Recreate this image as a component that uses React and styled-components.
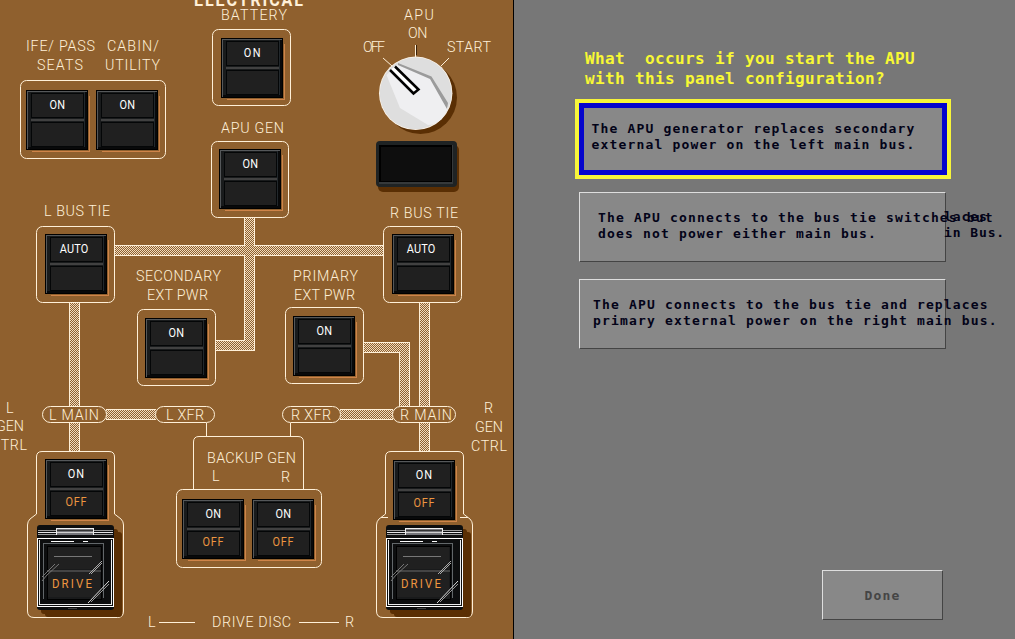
import React, { useLayoutEffect, useRef, useState } from 'react';
import styled, { createGlobalStyle } from 'styled-components';

const colors = {
  panel: '#8f602e',
  shadow: '#5a2f04',
  cream: '#fff0d8',
  orange: '#ee9640',
  glow: '#cf8449',
  screen: '#777777',
  button: '#888888',
  ink: '#030318',
};

const NARROW = 0.92;

const GlobalStyle = createGlobalStyle`
  body {
    margin: 0;
    overflow: hidden;
    background-color: ${colors.screen};
  }
`;

const Page = styled.div`
  display: grid;
  grid-template-columns: 514px 1fr;
  width: 1015px;
  height: 639px;
  overflow: hidden;
`;

/* ---------- overhead panel ---------- */

const Panel = styled.section`
  position: relative;
  box-sizing: border-box;
  height: 639px;
  overflow: hidden;
  background-color: ${colors.panel};
  border-right: 1px solid #000;
`;

const Schematic = styled.svg`
  position: absolute;
  top: 0;
  left: 0;
`;

const LabelText = styled.span`
  position: absolute;
  left: ${props => props.$x - 0.5}px;
  top: ${props => props.$base - 15}px;
  font-family: Roboto, 'Liberation Sans', sans-serif;
  font-size: ${props => props.$size}px;
  font-weight: ${props => (props.$bold ? 700 : 300)};
  line-height: 21px;
  color: ${colors.cream};
  white-space: pre;
  transform: scaleX(${NARROW});
  transform-origin: left;
`;

const SwitchBody = styled.div`
  position: absolute;
  left: ${props => props.$x}px;
  top: ${props => props.$y}px;
  box-sizing: border-box;
  width: 62px;
  height: 60px;
  padding: 2px 3px 3px 4px;
  display: grid;
  grid-template-rows: 25px 2px 25px;
  row-gap: 1px;
  background-color: #191b1c;
  border: 1px solid #000;
  box-shadow: inset 1px 1px 0 #55585a, inset -2px -2px 0 #08090a, inset -3px 0 0 #22282c;

  &::after {
    content: '';
    position: absolute;
    left: 5px;
    top: 5px;
    right: -3px;
    bottom: -3px;
    border-right: 1px solid ${colors.glow};
    border-bottom: 1px solid ${colors.glow};
  }
`;

const SwitchLens = styled.div`
  display: flex;
  justify-content: center;
  background-color: #202020;
  border: 1px solid #040607;
  box-sizing: border-box;
`;

const SwitchText = styled.span`
  font-family: Roboto, 'Liberation Sans', sans-serif;
  font-size: 13px;
  line-height: ${props => (props.$amber ? 19 : 22)}px;
  letter-spacing: ${props => props.$tracking}px;
  color: ${props => (props.$amber ? colors.orange : '#ffffff')};
  transform: translateX(${props => props.$shift || 0}px) scaleX(0.84);
`;

const SwitchBar = styled.div`
  background-color: #414141;
`;

const Guard = styled.div`
  position: absolute;
  left: ${props => props.$x}px;
  top: 525px;
  width: 77px;
  height: 85px;
  border-radius: 3px;
  background-color: #0d0e0f;
  box-shadow: 4px 4px 0 ${colors.shadow}, 8px 7px 0 ${colors.shadow};
`;

const GuardArt = styled.svg`
  display: block;
`;

const GuardText = styled.span`
  position: absolute;
  left: 15px;
  top: 50px;
  font-family: Roboto, 'Liberation Sans', sans-serif;
  font-size: 13px;
  line-height: 18px;
  letter-spacing: 2.4px;
  color: ${colors.orange};
  transform: scaleX(0.88);
  transform-origin: left;
`;

const labels = [
  ['ELECTRICAL', 194, 5, 107, 17.5, true],
  ['BATTERY', 221, 20, 64],
  ['IFE/ PASS', 26, 51, 67],
  ['SEATS', 37, 70, 44],
  ['CABIN/', 107, 51, 50],
  ['UTILITY', 105, 70, 53],
  ['APU GEN', 221, 133, 61],
  ['APU', 404, 20, 28],
  ['ON', 408, 38, 17.5],
  ['OFF', 363, 52, 20],
  ['START', 447, 52, 42],
  ['L BUS TIE', 44, 216, 64],
  ['R BUS TIE', 390, 218, 66],
  ['SECONDARY', 136, 281, 83],
  ['EXT PWR', 147, 300, 59],
  ['PRIMARY', 293, 281, 63],
  ['EXT PWR', 294, 300, 59],
  ['L MAIN', 49, 420, 48],
  ['L XFR', 166, 420, 36],
  ['R XFR', 291, 420, 38],
  ['R MAIN', 400, 420, 50],
  ['L', 6, 413, 6],
  ['GEN', -4, 431, 26],
  ['CTRL', -9, 450, 34],
  ['R', 484, 413, 7],
  ['GEN', 475, 432, 26],
  ['CTRL', 471, 451, 34],
  ['BACKUP GEN', 207, 463, 87],
  ['L', 212, 481, 6],
  ['R', 281, 482, 7],
  ['L', 148, 627, 6],
  ['DRIVE DISC', 212, 627, 77],
  ['R', 345, 627, 7],
];

const switches = [
  { x: 26, y: 90, top: 'ON' },
  { x: 96, y: 90, top: 'ON' },
  { x: 221, y: 38, top: 'ON', tracking: 1.8 },
  { x: 219, y: 149, top: 'ON' },
  { x: 45, y: 234, top: 'AUTO' },
  { x: 392, y: 234, top: 'AUTO' },
  { x: 145, y: 318, top: 'ON' },
  { x: 293, y: 316, top: 'ON' },
  { x: 45, y: 459, top: 'ON', bottom: 'OFF', tracking: 1.3 },
  { x: 393, y: 460, top: 'ON', bottom: 'OFF', tracking: 1.3 },
  { x: 182, y: 499, top: 'ON', bottom: 'OFF' },
  { x: 252, y: 499, top: 'ON', bottom: 'OFF' },
];

const frames = [
  [20, 80, 146, 79],
  [212, 29, 79, 77],
  [211, 141, 78, 77],
  [36, 226, 79, 77],
  [383, 226, 79, 77],
  [137, 309, 79, 77],
  [285, 307, 79, 77],
  [176, 489, 146, 79],
];

const pills = [
  [42, 65],
  [155, 60],
  [282, 59],
  [392, 64],
];

const wires = [
  'M115 250H384',
  'M249.500 218V345H216',
  'M74.500 303V452',
  'M424.500 303V452',
  'M364 347.500H404.500V410',
  'M106 414.500H156',
  'M340 414.500H393',
];

// Spreads or tightens the lettering so it fills its engraved width.
const Label = ({ text, x, base, width, size = 15.5, bold }) => {
  const ref = useRef(null);
  const [tracking, setTracking] = useState(0);

  useLayoutEffect(() => {
    if (text.length < 2) return;
    ref.current.style.letterSpacing = '0px';
    const natural = ref.current.getBoundingClientRect().width;
    const gap = (width + 2 - natural) / NARROW / (text.length - 1);
    ref.current.style.letterSpacing = `${gap}px`;
    setTracking(gap);
  }, [text, width]);

  return (
    <LabelText
      ref={ref}
      $x={x}
      $base={base}
      $size={size}
      $bold={bold}
      style={{ letterSpacing: `${tracking}px` }}
    >
      {text}
    </LabelText>
  );
};

const Switch = ({ x, y, top, bottom, tracking = 0.2 }) => (
  <SwitchBody $x={x} $y={y}>
    <SwitchLens>
      <SwitchText $tracking={tracking} $shift={top === 'AUTO' ? -2 : 0}>{top}</SwitchText>
    </SwitchLens>
    <SwitchBar />
    <SwitchLens>
      <SwitchText $amber $tracking={0.8} $shift={-0.5}>{bottom}</SwitchText>
    </SwitchLens>
  </SwitchBody>
);

const DriveGuard = ({ x }) => (
  <Guard $x={x}>
    <GuardArt width="77" height="85" viewBox="0 0 77 85" fill="none" shapeRendering="crispEdges">
      <path d="M1 5.500H76M1 9.500H76" stroke="#9a9a9a" />
      <path d="M1 7.500H76" stroke="#e5e5e8" />
      <path d="M19 3H57V10H19Z" fill="#75757a" />
      <path d="M19.500 3V10M56.500 3V10M20 3.500H56" stroke="#f0f0f0" />
      <path d="M20 5.500H56" stroke="#333" />
      <path d="M20 7.500H56" stroke="#d0d0d0" />
      <path d="M0.500 13.500H76.500V81.500H0.500Z" stroke="#fff" />
      <path d="M2.500 15V79.500H74.500V15" stroke="#eee" />
      <path d="M14 16.500H37M46 16.500H51" stroke="#fff" />
      <path d="M6.500 74V18.500H66.500V73" stroke="#62676a" />
      <path d="M10 21H64V74H10Z" fill="#191a1b" stroke="#000" />
      <path d="M11 22H63V44H11ZM11 47H63V72H11Z" fill="#202020" />
      <path d="M10 45.500H64" stroke="#444" strokeWidth="2" />
      <path d="M17 31.500H55" stroke="#777" />
      <path d="M31 83.500H40" stroke="#444" />
      <g shapeRendering="auto" stroke="#aaa">
        <path d="M5 56L10 50L22 39M5 52L18 39" stroke="#777" />
        <path d="M52 49L65 36M54 49L65 38" />
        <path d="M51 78L72 56" stroke="#ddd" />
        <path d="M54 77L72 59" stroke="#999" />
      </g>
    </GuardArt>
    <GuardText>DRIVE</GuardText>
  </Guard>
);

const PanelDrawing = () => (
  <Schematic width="513" height="639" viewBox="0 0 513 639" fill="none" stroke={colors.cream}>
    <defs>
      <pattern id="dots" width="2" height="2" patternUnits="userSpaceOnUse">
        <path d="M0 0h1v1h-1zM1 1h1v1h-1z" fill="#f0dcc0" stroke="none" />
      </pattern>
    </defs>

    <g shapeRendering="crispEdges">
      {wires.map(d => <path key={d} d={d} strokeWidth="11" />)}
      {wires.map(d => <path key={d} d={d} strokeWidth="9" stroke={colors.panel} />)}
      {wires.map(d => <path key={d} d={d} strokeWidth="9" stroke="url(#dots)" />)}
    </g>

    {frames.map(([x, y, w, h]) => (
      <rect key={`${x}-${y}`} x={x + 0.5} y={y + 0.5} width={w - 1} height={h - 1} rx="6" fill={colors.panel} />
    ))}
    {pills.map(([x, w]) => (
      <rect key={x} x={x + 0.5} y="406.500" width={w - 1} height="16" rx="8" fill={colors.panel} />
    ))}

    <path d="M193.500 489V442q0 -5.500 5.500 -5.500H298q5.500 0 5.500 5.500V489" />
    <path d="M206.500 423V436M290.500 423V436" />
    <path d="M159 622.500H195M299 622.500H339" />

    {/* generator control surrounds */}
    <path
      fill={colors.panel}
      d="M36.500 514V457q0 -5.500 5.500 -5.500H109q5.500 0 5.500 5.500V514L121 519q2.500 2.500 2.500 6V611q0 6.500 -6 6.500H34q-6.500 0 -6.500 -6.500V525q0 -3.500 2.500 -6Z"
    />
    <path
      fill={colors.panel}
      d="M385.500 514V457q0 -5.500 5.500 -5.500H458q5.500 0 5.500 5.500V514L470 519q2.500 2.500 2.500 6V611q0 6.500 -6 6.500H383q-6.500 0 -6.500 -6.500V525q0 -3.500 2.500 -6Z"
    />
    <path d="M381 517.500H388M460 517.500H468" />

    {/* APU selector */}
    <path d="M383 58L392 66M449 58L441 66M415.500 45V57" />
    <path d="M416.500 45V55" stroke="#3a2108" />
    <g stroke="none">
      <circle cx="420.500" cy="97.500" r="36.500" fill={colors.shadow} />
      <circle cx="415.700" cy="93.300" r="36.700" fill="#fff5e8" />
      <circle cx="415.700" cy="93.300" r="36" fill="#dedede" />
      <path d="M386.500 75L397 65L431 78L448 108C444 119 436 125 428 125L400 108Z" fill="#efeff1" />
      <path d="M398 63L431.500 76.500L448 103L447 109L430 79L398 65Z" fill="#9b9b9b" />
    </g>
    <path d="M390 70L413.500 93.500L418.500 89.500L395 66.500" fill="#fff" stroke="#000" strokeWidth="2.500" />

    {/* APU fault display */}
    <g stroke="none">
      <rect x="378" y="145" width="81" height="47" rx="5" fill={colors.shadow} />
      <rect x="376" y="141" width="81" height="46" rx="4" fill="#1f2324" />
      <rect x="379" y="145" width="74" height="39" fill="#36393a" />
      <rect x="379" y="145" width="73" height="37" fill="#000" />
      <rect x="381" y="147" width="70" height="34" fill="#0e0e0e" />
    </g>
  </Schematic>
);

/* ---------- question side ---------- */

const Quiz = styled.section`
  display: flex;
  flex-direction: column;
  box-sizing: border-box;
  height: 639px;
  padding: 49px 0 19px 61px;
  background-color: ${colors.screen};
  font-family: 'DejaVu Sans Mono', 'Liberation Mono', monospace;
  font-weight: 700;
`;

const Question = styled.h1`
  margin: 0 0 10px 10px;
  font-size: 16px;
  font-weight: 700;
  line-height: 20px;
  letter-spacing: 0.37px;
  white-space: pre;
  color: #f8f834;
`;

const Answers = styled.div`
  display: flex;
  flex-direction: column;
  align-items: flex-start;
`;

const Answer = styled.button`
  position: relative;
  display: flex;
  align-items: flex-start;
  box-sizing: border-box;
  width: 367px;
  height: 70px;
  margin: 0 0 17px 4px;
  padding: 17px 0 0 ${props => props.$indent}px;
  border: 1px solid;
  border-color: #dedede #444 #444 #dedede;
  border-radius: 0;
  background-color: ${colors.button};
  color: ${colors.ink};
  font: inherit;
  font-size: 13px;
  line-height: 16px;
  letter-spacing: 1.17px;
  text-align: left;
  white-space: pre;
`;

const SelectedAnswer = styled(Answer)`
  width: 376px;
  height: 80px;
  margin: 0 0 13px;
  padding: 18px 0 0 12.5px;
  border: 4px solid #f7f53a;
  outline: 5px solid #0505cc;
  outline-offset: -9px;
`;

// Leftover lines of the previous answer that stick out past the button edge.
const Leftover = styled.span`
  position: absolute;
  left: 364px;
  top: 16px;
  width: 64px;
  letter-spacing: 0.9px;
`;

const Footer = styled.footer`
  display: flex;
  justify-content: flex-end;
  margin-top: auto;
  padding-right: 72px;
`;

const DoneButton = styled.button`
  width: 121px;
  height: 50px;
  padding: 0;
  border: 1px solid;
  border-color: #dedede #444 #444 #dedede;
  background-color: ${colors.button};
  color: #454545;
  font: inherit;
  font-size: 13px;
  letter-spacing: 1.17px;
`;

const App = () => (
  <>
    <GlobalStyle />
    <Page>
      <Panel>
        <PanelDrawing />
        {labels.map(([text, x, base, width, size, bold]) => (
          <Label key={`${text}-${x}-${base}`} text={text} x={x} base={base} width={width} size={size} bold={bold} />
        ))}
        {switches.map(item => <Switch key={`${item.x}-${item.y}`} {...item} />)}
        <DriveGuard x={37} />
        <DriveGuard x={386} />
      </Panel>

      <Quiz>
        <Question>{'What  occurs if you start the APU\nwith this panel configuration?'}</Question>
        <Answers>
          <SelectedAnswer>
            {'The APU generator replaces secondary\nexternal power on the left main bus.'}
          </SelectedAnswer>
          <Answer $indent={18}>
            {'The APU connects to the bus tie switches but\ndoes not power either main bus.'}
            <Leftover>{'laces\nin Bus.'}</Leftover>
          </Answer>
          <Answer $indent={13}>
            {'The APU connects to the bus tie and replaces\nprimary external power on the right main bus.'}
          </Answer>
        </Answers>
        <Footer>
          <DoneButton>Done</DoneButton>
        </Footer>
      </Quiz>
    </Page>
  </>
);

export default App;
